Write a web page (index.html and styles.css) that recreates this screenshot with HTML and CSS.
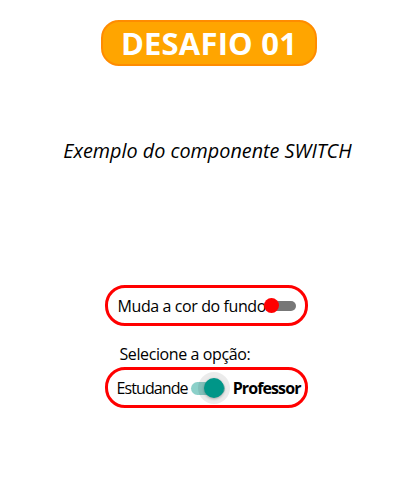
FILE: index.html
```html
<!DOCTYPE html>
<html lang="pt">
<head>
<meta charset="utf-8">
<link rel="stylesheet" href="styles.css">
</head>
<body>
<main class="page">
  <h1 class="badge">DESAFIO 01</h1>
  <p class="subtitle">Exemplo do componente SWITCH</p>
  <div class="box box-one">
    <span class="label">Muda a cor do fundo</span>
    <span class="switch-red">
      <span class="track-red"></span>
      <span class="thumb-red"></span>
    </span>
  </div>
  <p class="prompt">Selecione a opção:</p>
  <div class="box box-two">
    <span class="label label-tight">Estudande</span>
    <span class="switch-teal">
      <span class="track-teal"></span>
      <span class="halo"></span>
      <span class="thumb-teal"></span>
    </span>
    <strong class="label-bold">Professor</strong>
  </div>
</main>
</body>
</html>
```
FILE: styles.css
```css
* { box-sizing: border-box; }
body {
  margin: 0;
  background: #ffffff;
  font-family: "Open Sans", "Noto Sans", sans-serif;
  color: #000;
}
.page {
  display: flex;
  flex-direction: column;
  align-items: center;
  width: 415px;
  padding-top: 20px;
}
.badge {
  margin: 0 0 0 3px;
  width: 216px;
  height: 46px;
  border: 2px solid #ff8c00;
  border-radius: 18px;
  background: #ffa500;
  color: #fff;
  font-size: 31px;
  font-weight: 700;
  line-height: 42px;
  text-align: center;
  letter-spacing: 0.2px;
}
.subtitle {
  margin: 72px 0 0 0;
  font-size: 19.8px;
  font-style: italic;
  line-height: 26px;
}
.box {
  display: flex;
  align-items: center;
  width: 203px;
  height: 41px;
  border: 3px solid #ff0000;
  border-radius: 20px;
  font-size: 16px;
  margin-right: 3px;
}
.box-one {
  margin-top: 121px;
  padding: 0 0 0 10px;
}
.box-two {
  padding: 0 0 0 9px;
}
.label { letter-spacing: -0.4px; white-space: nowrap; }
.label-tight { letter-spacing: -0.9px; }
.switch-red {
  position: relative;
  width: 34px;
  height: 16px;
  margin-left: -2px;
}
.track-red {
  position: absolute;
  left: 2px; top: 3px;
  width: 30px; height: 10px;
  border-radius: 5px;
  background: #777777;
}
.thumb-red {
  position: absolute;
  left: 0; top: 0;
  width: 15px; height: 15px;
  border-radius: 50%;
  background: #ff0000;
}
.prompt {
  margin: 18px 0 3px 0;
  width: 203px;
  padding-left: 15px;
  font-size: 16px;
  line-height: 20px;
  letter-spacing: -0.4px;
  margin-right: 3px;
}
.switch-teal {
  position: relative;
  flex: 0 0 45px;
  height: 34px;
}
.track-teal {
  position: absolute;
  left: 3px; top: 11px;
  width: 34px; height: 13px;
  border-radius: 7px;
  background: rgba(0, 150, 136, 0.45);
}
.halo {
  position: absolute;
  left: 10px; top: 1px;
  width: 32px; height: 32px;
  border-radius: 50%;
  background: rgba(0, 0, 0, 0.08);
}
.thumb-teal {
  position: absolute;
  left: 16px; top: 7px;
  width: 20px; height: 20px;
  border-radius: 50%;
  background: #009688;
  box-shadow: 0 1px 3px rgba(0,0,0,0.3);
}
.label-bold { font-weight: 700; letter-spacing: -0.9px; white-space: nowrap; }
```
